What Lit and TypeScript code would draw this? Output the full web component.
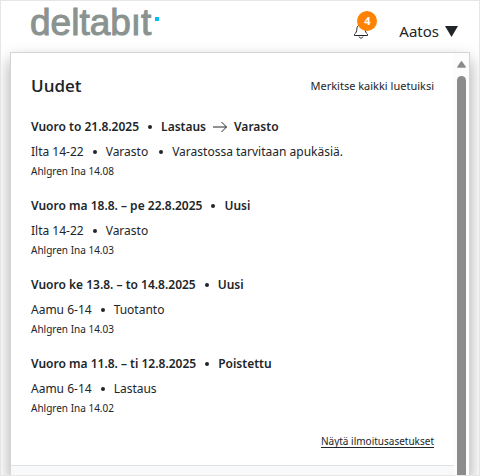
import { LitElement, html, css, nothing } from "lit";
import { customElement, property } from "lit/decorators.js";

interface Shift {
  date: string;
  status: string;
  movedTo?: string;
  details: string[];
  author: string;
}

const SHIFTS: Shift[] = [
  {
    date: "Vuoro to 21.8.2025",
    status: "Lastaus",
    movedTo: "Varasto",
    details: ["Ilta 14-22", "Varasto", "Varastossa tarvitaan apukäsiä."],
    author: "Ahlgren Ina 14.08",
  },
  {
    date: "Vuoro ma 18.8. – pe 22.8.2025",
    status: "Uusi",
    details: ["Ilta 14-22", "Varasto"],
    author: "Ahlgren Ina 14.03",
  },
  {
    date: "Vuoro ke 13.8. – to 14.8.2025",
    status: "Uusi",
    details: ["Aamu 6-14", "Tuotanto"],
    author: "Ahlgren Ina 14.03",
  },
  {
    date: "Vuoro ma 11.8. – ti 12.8.2025",
    status: "Poistettu",
    details: ["Aamu 6-14", "Lastaus"],
    author: "Ahlgren Ina 14.02",
  },
];

@customElement("shift-notice")
export class ShiftNotice extends LitElement {
  @property({ attribute: false }) shift!: Shift;

  static styles = css`
    :host {
      display: block;
    }
    .title,
    .details {
      display: flex;
      align-items: center;
      margin: 0;
      font-size: 12px;
      line-height: 24px;
      white-space: nowrap;
    }
    .title {
      font-weight: 600;
      margin-bottom: 1px;
    }
    .dot {
      width: 4px;
      height: 4px;
      border-radius: 50%;
      background: #212529;
      margin: 0 9px;
    }
    .arrow {
      width: 16px;
      height: 12px;
      margin: 0 6px;
    }
    .author {
      margin: 0;
      font-size: 10px;
      line-height: 14px;
    }
    .note {
      margin-left: 11px;
    }
  `;

  render() {
    const s = this.shift;
    return html`
      <h3 class="title">
        <span>${s.date}</span><i class="dot"></i><span>${s.status}</span>
        ${s.movedTo
          ? html`<svg class="arrow" viewBox="0 0 16 12" fill="none" stroke="#212529" aria-hidden="true">
                <path d="M1 6H14.5M9.5 1L14.5 6L9.5 11" />
              </svg><span>${s.movedTo}</span>`
          : nothing}
      </h3>
      <p class="details">
        ${s.details.map(
          (d, i) => html`${i ? html`<i class="dot ${i > 1 ? "note" : ""}"></i>` : nothing}<span>${d}</span>`
        )}
      </p>
      <p class="author">${s.author}</p>
    `;
  }
}

@customElement("app-root")
export class AppRoot extends LitElement {
  static styles = css`
    :host {
      display: flex;
      flex-direction: column;
      box-sizing: border-box;
      height: 100vh;
      overflow: hidden;
      border: 1px solid #e6e6e6;
      background: #fff;
      color: #212529;
      font-family: "Noto Sans", "Open Sans", sans-serif;
    }
    .bar {
      display: flex;
      align-items: flex-start;
      justify-content: space-between;
      flex: none;
      height: 51px;
      padding: 0 21px 0 29px;
    }
    .logo {
      display: flex;
      color: #8a938f;
      font: 37px/44px "Liberation Sans", sans-serif;
      -webkit-text-stroke: 1px #8a938f;
      text-decoration: none;
    }
    .spark {
      width: 4px;
      height: 4px;
      margin: 16px 0 0 4px;
      background: #00bdf2;
    }
    .tools {
      display: flex;
      align-items: center;
      gap: 22px;
      padding-top: 18px;
    }
    button {
      border: 0;
      padding: 0;
      background: none;
      color: inherit;
      font: inherit;
      cursor: pointer;
    }
    .bell {
      position: relative;
      width: 24px;
      height: 24px;
    }
    .bell svg {
      display: block;
      width: 16px;
      height: 16px;
    }
    .badge {
      position: absolute;
      top: -8px;
      right: 0;
      width: 20px;
      height: 20px;
      border-radius: 50%;
      background: #ff8300;
      color: #fff;
      font-size: 11px;
      font-weight: 700;
      line-height: 20px;
    }
    .user {
      display: flex;
      align-items: center;
      gap: 6px;
      font-size: 15px;
      line-height: 24px;
    }
    .user svg {
      width: 13px;
      height: 11px;
    }
    .panel {
      display: flex;
      flex: 1;
      min-height: 0;
      margin: 0 9px;
      border: 1px solid #d4d4d4;
      border-bottom: 0;
      background: #fff;
      box-shadow: 0 8px 16px rgba(0, 0, 0, 0.35);
    }
    .content {
      display: flex;
      flex-direction: column;
      flex: 1;
      min-width: 0;
    }
    .section {
      padding: 20px 20px 16px;
      border-bottom: 1px solid #dee2e6;
    }
    .head {
      display: flex;
      align-items: center;
      justify-content: space-between;
      margin-bottom: 16px;
      line-height: 26px;
    }
    .head h2 {
      margin: 0;
      font-family: "Open Sans", sans-serif;
      font-size: 17px;
      font-weight: 600;
    }
    .read {
      font-size: 11px;
    }
    .list {
      display: grid;
      gap: 16px;
    }
    .foot {
      display: flex;
      justify-content: flex-end;
      margin-top: 18px;
      font-size: 10px;
      line-height: 16px;
    }
    .foot a {
      color: inherit;
      text-underline-offset: 2px;
    }
    .rest {
      flex: 1;
      background: #f8f9fa;
    }
    .scroll {
      display: flex;
      flex-direction: column;
      align-items: center;
      gap: 8px;
      width: 15px;
      padding-top: 8px;
      background: #fcfcfc;
    }
    .up {
      width: 9px;
      height: 7px;
    }
    .thumb {
      flex: 1;
      width: 9px;
      border-radius: 5px 5px 0 0;
      background: #8b8b8b;
    }
  `;

  render() {
    return html`
      <header class="bar">
        <a class="logo" href="#" aria-label="deltabit"><span>deltabıt</span><i class="spark"></i></a>
        <div class="tools">
          <button class="bell" aria-label="Ilmoitukset">
            <svg viewBox="0 0 16 16" fill="none" stroke="#212529" stroke-linejoin="round" aria-hidden="true">
              <path d="M8 1.5C5.2 1.8 3.8 3.8 3.8 6.2C3.8 8.6 3 10 1.5 11.2V12.5H14.5V11.2C13 10 12.2 8.6 12.2 6.2C12.2 3.8 10.8 1.8 8 1.5Z" />
              <path d="M6 13.5C6.5 15.6 9.5 15.6 10 13.5" />
            </svg>
            <span class="badge">4</span>
          </button>
          <button class="user">
            <span>Aatos</span>
            <svg viewBox="0 0 13 11" aria-hidden="true"><path d="M0 0H13L6.5 11Z" fill="#212529" /></svg>
          </button>
        </div>
      </header>
      <main class="panel">
        <div class="content">
          <section class="section">
            <div class="head">
              <h2>Uudet</h2>
              <button class="read">Merkitse kaikki luetuiksi</button>
            </div>
            <div class="list">
              ${SHIFTS.map((s) => html`<shift-notice .shift=${s}></shift-notice>`)}
            </div>
            <div class="foot"><a href="#">Näytä ilmoitusasetukset</a></div>
          </section>
          <div class="rest"></div>
        </div>
        <div class="scroll" aria-hidden="true">
          <svg class="up" viewBox="0 0 9 7">
            <path d="M4.5 1L8 6H1Z" fill="#8b8b8b" stroke="#8b8b8b" stroke-width="1.6" stroke-linejoin="round" />
          </svg>
          <div class="thumb"></div>
        </div>
      </main>
    `;
  }
}
